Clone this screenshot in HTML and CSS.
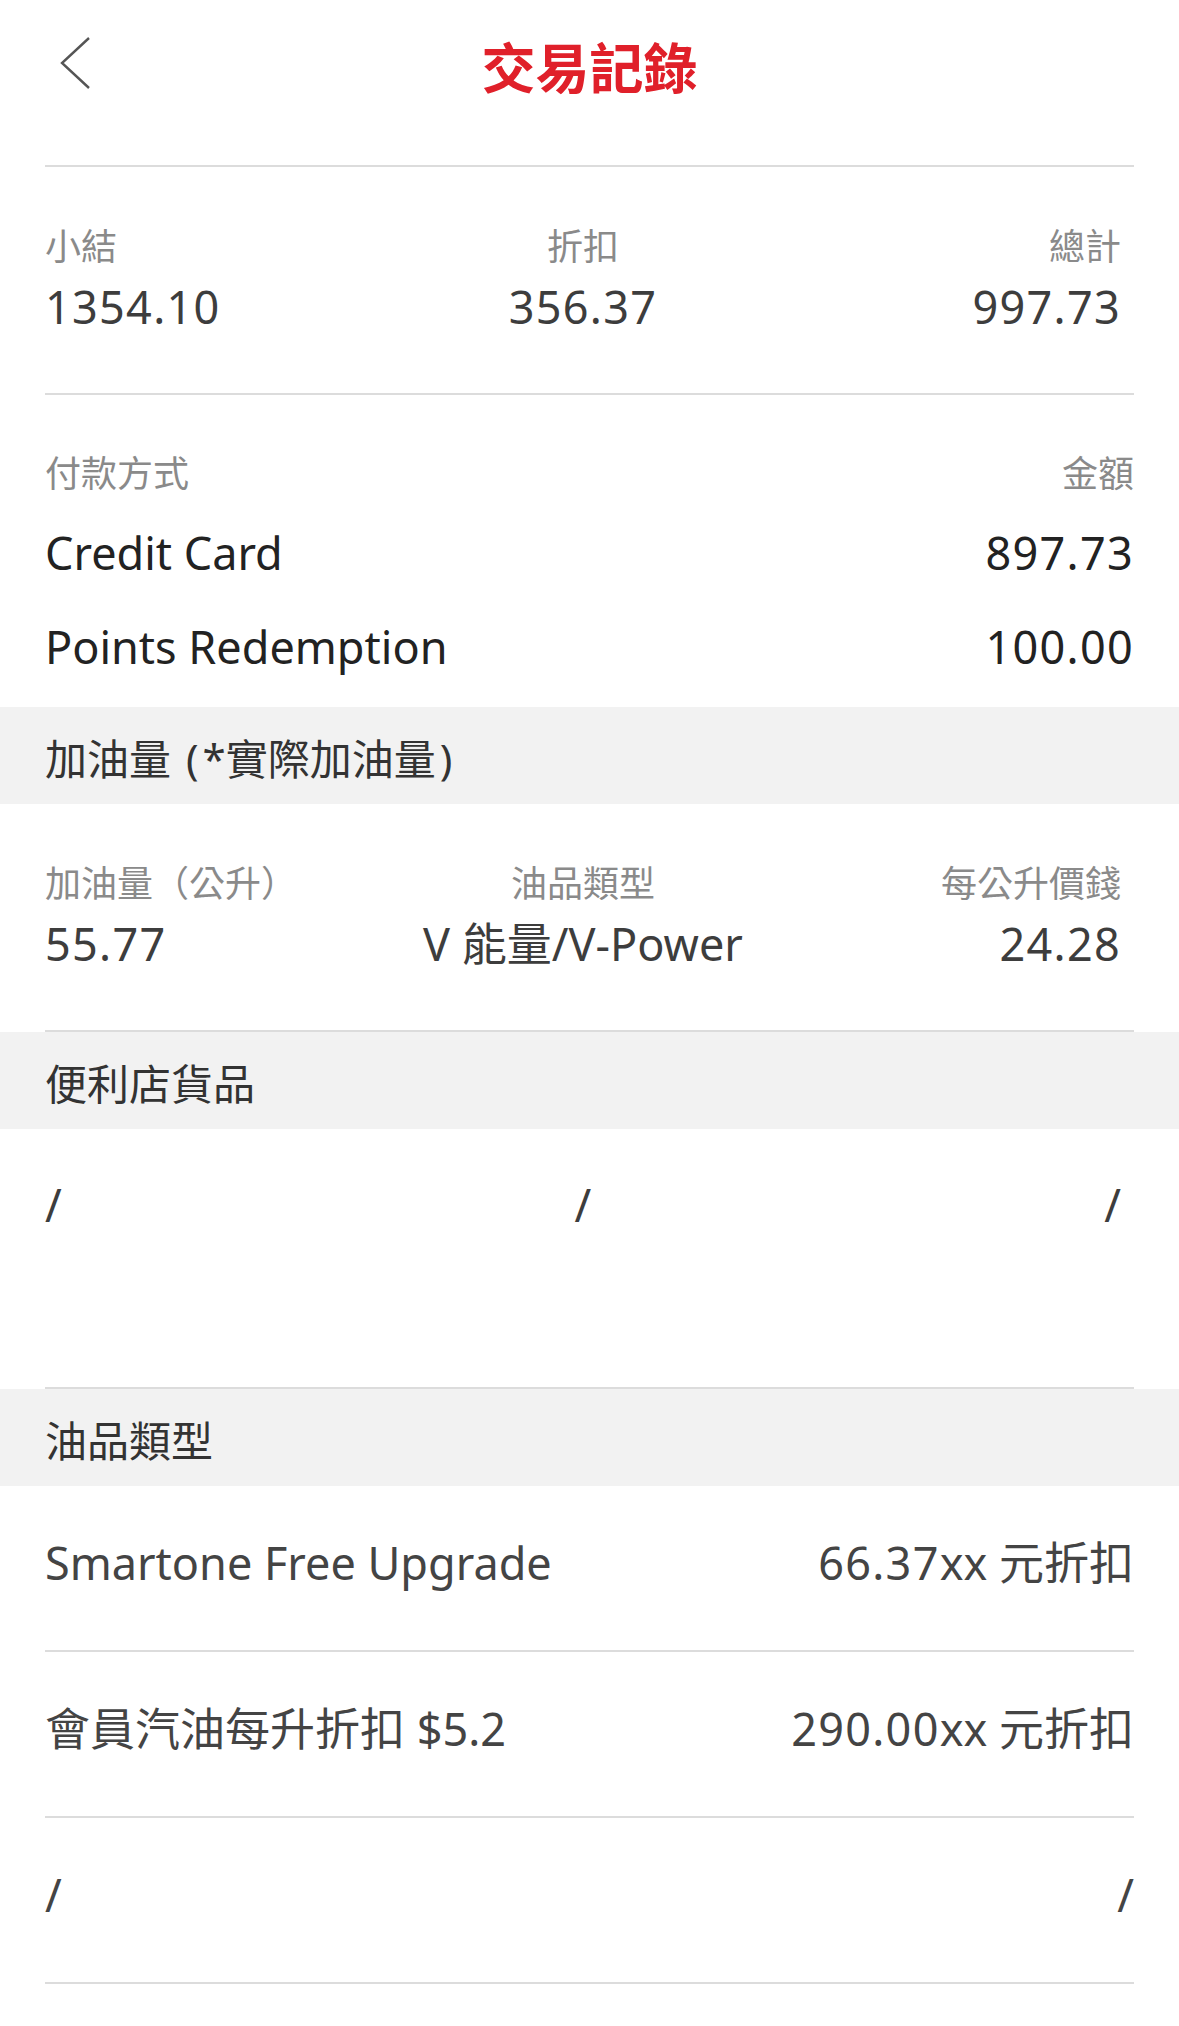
FILE: index.html
```html
<!DOCTYPE html>
<html lang="zh-Hant">
<head>
<title>交易記錄</title>
<meta charset="UTF-8">
<meta name="viewport" content="width=device-width, initial-scale=1.0">
<link rel="stylesheet" href="styles.css">
</head>
<body>

<div class="topbar">
  <a class="back" href="#">
    <svg width="30" height="52" viewBox="0 0 30 52"><polyline points="29,1 2,26 29,51" fill="none" stroke="#555" stroke-width="2.4"/></svg>
  </a>
  <h1 class="title">交易記錄</h1>
  <span></span>
</div>

<div class="rule"></div>

<div class="cols3">
  <div class="label">小結</div>
  <div class="label">折扣</div>
  <div class="label">總計</div>
  <div class="value num">1354.10</div>
  <div class="value num">356.37</div>
  <div class="value num">997.73</div>
</div>

<div class="rule"></div>

<div class="pay">
  <div class="pay-head">
    <span class="label">付款方式</span>
    <span class="label">金額</span>
  </div>
  <div class="pay-row">
    <span>Credit Card</span>
    <span class="num">897.73</span>
  </div>
  <div class="pay-row">
    <span>Points Redemption</span>
    <span class="num">100.00</span>
  </div>
</div>

<div class="band">加油量 <span class="paren">(</span>*實際加油量<span class="paren">)</span></div>

<div class="cols3">
  <div class="label">加油量（公升）</div>
  <div class="label">油品類型</div>
  <div class="label">每公升價錢</div>
  <div class="value num">55.77</div>
  <div class="value">V 能量/V-Power</div>
  <div class="value num">24.28</div>
</div>

<div class="rule"></div>

<div class="band">便利店貨品</div>

<div class="cols3 shop">
  <div class="value">/</div>
  <div class="value">/</div>
  <div class="value">/</div>
</div>

<div class="rule"></div>

<div class="band">油品類型</div>

<ul class="discounts">
  <li><span>Smartone Free Upgrade</span><span><span class="num">66.37</span>xx 元折扣</span></li>
  <li><span>會員汽油每升折扣 $5.2</span><span><span class="num">290.00</span>xx 元折扣</span></li>
  <li><span>/</span><span>/</span></li>
</ul>

</body>
</html>
```

FILE: styles.css
```css
body {
  margin: 0;
  font-family: "Noto Sans", "Noto Sans CJK TC", sans-serif;
  background: #fff;
  color: #333;
}

.topbar {
  display: grid;
  grid-template-columns: 1fr auto 1fr;
  align-items: center;
  height: 132px;
  padding: 0 60px;
  margin-bottom: 33px;
}

.back {
  display: block;
  width: 30px;
  height: 52px;
  margin-top: -7px;
}

.back svg {
  display: block;
}

.title {
  margin: 0;
  font-family: "Noto Sans CJK TC", sans-serif;
  font-size: 54px;
  font-weight: 700;
  line-height: 60px;
  color: #e0202a;
}

.rule {
  margin: 0 45px;
  border-top: 2px solid #dcdcdc;
}

.label {
  font-size: 36px;
  line-height: 50px;
  color: #8a8a8a;
}

.cols3 {
  display: grid;
  grid-template-columns: 1fr 1fr 1fr;
  row-gap: 5px;
  padding: 55px 58px 56px 45px;
}

.cols3 > :nth-child(3n+2) {
  text-align: center;
}

.cols3 > :nth-child(3n) {
  text-align: right;
}

.value {
  font-size: 45px;
  line-height: 60px;
  color: #3d3d3d;
  white-space: nowrap;
}

.num {
  letter-spacing: 1.3px;
}

.cols3.shop {
  padding: 46px 58px 152px 45px;
}

.pay {
  padding: 54px 45px 13px;
}

.pay-head {
  display: flex;
  justify-content: space-between;
  margin-bottom: 7px;
}

.pay-row {
  display: flex;
  justify-content: space-between;
  font-size: 45px;
  line-height: 94px;
  color: #222;
}

.band {
  box-sizing: border-box;
  height: 97px;
  padding: 7px 45px 0;
  background: #f2f2f2;
  font-size: 42px;
  line-height: 90px;
  color: #333;
}

.band .paren {
  padding: 0 4px;
}

.discounts {
  list-style: none;
  margin: 0;
  padding: 0;
}

.discounts li {
  display: flex;
  justify-content: space-between;
  margin: 0 45px;
  padding: 47px 0 57px;
  border-bottom: 2px solid #dcdcdc;
  font-size: 45px;
  line-height: 60px;
  color: #444;
}
```
